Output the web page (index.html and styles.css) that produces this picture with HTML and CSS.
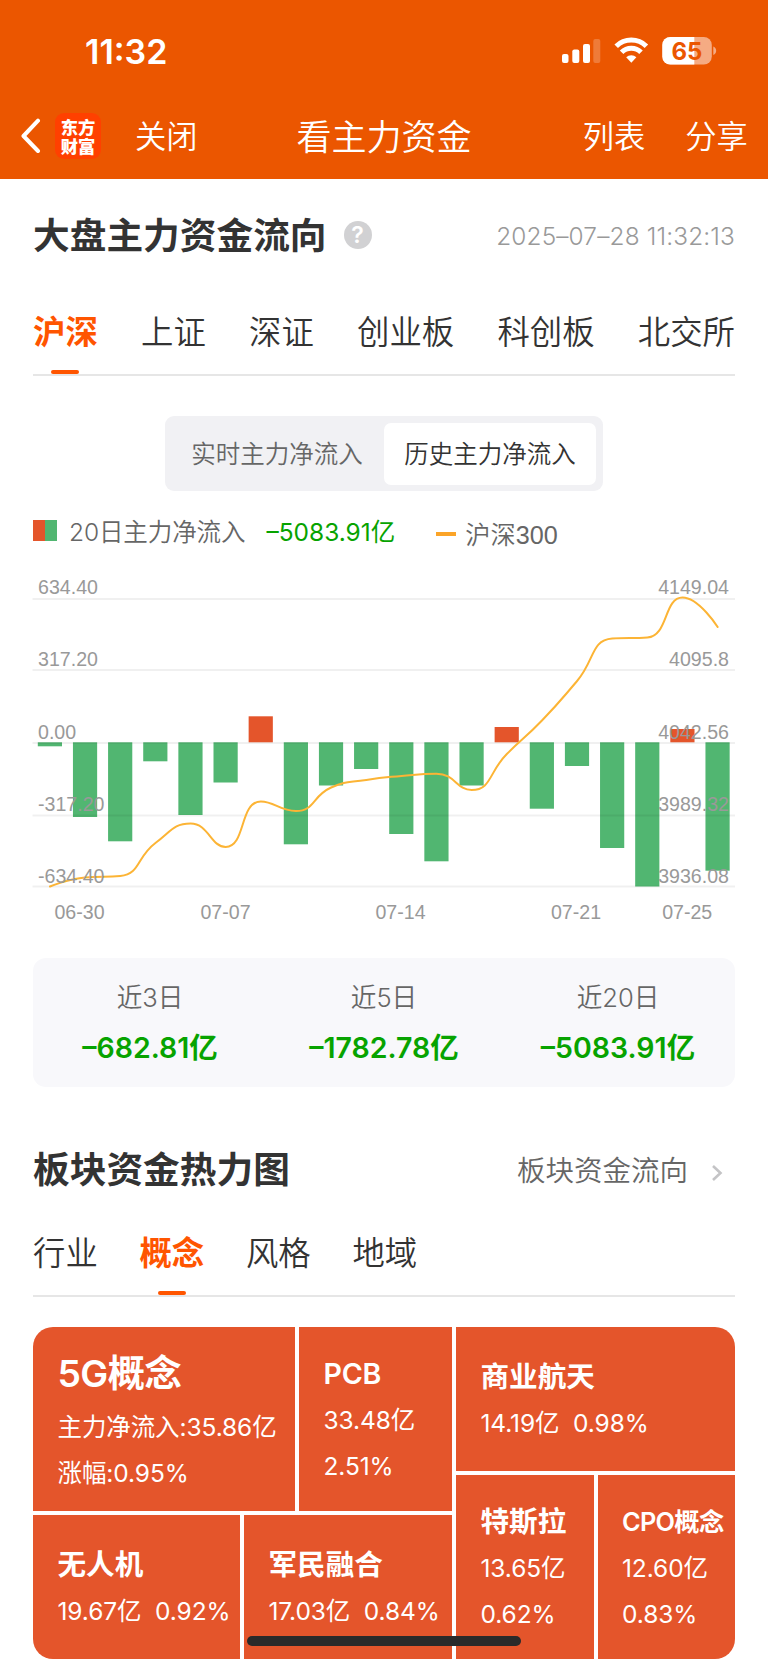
FILE: index.html
```html
<!DOCTYPE html>
<html lang="zh-CN">
<head>
<meta charset="utf-8">
<title>看主力资金</title>
<link rel="stylesheet" href="styles.css">
</head>
<body>
<header class="header">
  <div class="status">
    <span class="clock">11:32</span>
    <svg class="status-icons" width="160" height="34" viewBox="0 0 160 34">
      <g fill="#fff">
        <rect x="2" y="18" width="6.5" height="9" rx="2"/>
        <rect x="12.3" y="13.5" width="7" height="13.5" rx="2"/>
        <rect x="23" y="8" width="7" height="19" rx="2"/>
        <rect x="33.3" y="3" width="7" height="24" rx="2" opacity=".22"/>
      </g>
      <g fill="none" stroke="#fff" stroke-width="5">
        <path d="M56.2 10.2A21.5 21.5 0 0 1 86.4 10.2"/>
        <path d="M61.6 16.2A13.7 13.7 0 0 1 81 16.2"/>
      </g>
      <path d="M66.2 21.3A7.2 7.2 0 0 1 76.4 21.3L71.3 26.8Z" fill="#fff"/>
      <clipPath id="shell"><rect x="102.3" y="1" width="49.5" height="27.5" rx="8"/></clipPath>
      <g clip-path="url(#shell)">
        <rect x="102" y="1" width="50" height="28" fill="#f5ab83"/>
        <rect x="102" y="1" width="32.3" height="28" fill="#fff"/>
      </g>
      <path d="M153.3 10.5a4.6 4.6 0 0 1 0 8.5z" fill="#f5ab83"/>
      <text x="127" y="24" class="battery">65</text>
    </svg>
  </div>
  <nav class="nav">
    <svg class="back" width="20" height="36" viewBox="0 0 20 36"><path d="M17 2.7L2.5 18L17 33" fill="none" stroke="#fff" stroke-width="4" stroke-linecap="round" stroke-linejoin="round"/></svg>
    <span class="logo">东方<br>财富</span>
    <span class="close">关闭</span>
    <h1 class="title">看主力资金</h1>
    <span class="list">列表</span>
    <span class="share">分享</span>
  </nav>
</header>

<main class="main">
  <section>
    <div class="head head-flow">
      <h2>大盘主力资金流向</h2>
      <span class="help">?</span>
      <time class="date">2025–07–28 11:32:13</time>
    </div>
    <div class="tabs tabs-market">
      <span class="tab active">沪深</span><span class="tab">上证</span><span class="tab">深证</span><span class="tab">创业板</span><span class="tab">科创板</span><span class="tab">北交所</span>
    </div>
    <div class="segment">
      <span class="seg">实时主力净流入</span><span class="seg seg-on">历史主力净流入</span>
    </div>
    <div class="legend">
      <i class="swatch"></i>
      <span class="legend-name">20日主力净流入</span>
      <span class="legend-value">–5083.91亿</span>
      <i class="dash"></i>
      <span class="legend-index">沪深300</span>
    </div>
    <svg class="chart" id="chart" width="768" height="365" viewBox="0 570 768 365">
      <g id="bars"></g>
      <g class="grid">
        <path d="M32.5 599H735M32.5 670H735M32.5 743H735M32.5 815.5H735M32.5 886.5H735"/>
      </g>
      <path id="line" class="line"/>
      <g class="axis">
        <text x="38" y="593.6">634.40</text><text x="38" y="666">317.20</text><text x="38" y="738.5">0.00</text><text x="38" y="810.5">-317.20</text><text x="38" y="882.6">-634.40</text>
      </g>
      <g class="axis end">
        <text x="729" y="593.6">4149.04</text><text x="729" y="666">4095.8</text><text x="729" y="738.5">4042.56</text><text x="729" y="810.5">3989.32</text><text x="729" y="882.6">3936.08</text>
      </g>
      <g class="axis mid">
        <text x="79.5" y="918.5">06-30</text><text x="225.5" y="918.5">07-07</text><text x="400.5" y="918.5">07-14</text><text x="576" y="918.5">07-21</text><text x="687.2" y="918.5">07-25</text>
      </g>
    </svg>
    <div class="stats">
      <div><span>近3日</span><b>–682.81亿</b></div>
      <div><span>近5日</span><b>–1782.78亿</b></div>
      <div><span>近20日</span><b>–5083.91亿</b></div>
    </div>
  </section>

  <section>
    <div class="head head-heat">
      <h2>板块资金热力图</h2>
      <span class="more">板块资金流向</span>
      <svg class="chev" width="12" height="18" viewBox="0 0 12 18"><path d="M2 2L9.5 9L2 16" fill="none" stroke="#c4c4c6" stroke-width="2.6"/></svg>
    </div>
    <div class="tabs tabs-kind">
      <span class="tab">行业</span><span class="tab active">概念</span><span class="tab">风格</span><span class="tab">地域</span>
    </div>
    <div class="map">
      <div class="map-left">
        <div class="row row-a">
          <div class="tile"><b class="t-xl">5G概念</b><span>主力净流入:35.86亿</span><span>涨幅:0.95%</span></div>
          <div class="tile"><b class="t-lg">PCB</b><span>33.48亿</span><span>2.51%</span></div>
        </div>
        <div class="row row-b">
          <div class="tile"><b>无人机</b><span>19.67亿&nbsp; 0.92%</span></div>
          <div class="tile"><b>军民融合</b><span>17.03亿&nbsp; 0.84%</span></div>
        </div>
      </div>
      <div class="map-right">
        <div class="tile tile-wide"><b>商业航天</b><span>14.19亿&nbsp; 0.98%</span></div>
        <div class="row row-c">
          <div class="tile"><b>特斯拉</b><span>13.65亿</span><span>0.62%</span></div>
          <div class="tile"><b class="t-sm">CPO概念</b><span>12.60亿</span><span>0.83%</span></div>
        </div>
      </div>
    </div>
  </section>
</main>
<div class="home"></div>
<script src="chart.js"></script>
</body>
</html>
```
FILE: styles.css
```css
* { box-sizing: border-box; }
body {
  margin: 0;
  width: 768px;
  height: 1663px;
  overflow: hidden;
  position: relative;
  background: #fff;
  color: #333;
  font-family: Inter, "Noto Sans CJK SC", sans-serif;
  white-space: nowrap;
}
h1, h2 { margin: 0; }
i { display: block; }

.header { height: 179px; background: #eb5600; color: #fff; }
.status { height: 102px; display: flex; justify-content: space-between; padding: 36px 48px 0 85px; }
.clock { font-size: 34px; line-height: 31px; font-weight: 600; }
.status-icons { flex: none; }
.battery { font: 700 24px Inter, sans-serif; fill: #eb5600; text-anchor: middle; }
.nav { height: 68px; display: flex; align-items: center; font-weight: 350; font-size: 31.3px; line-height: 40px; }
.nav > span:not(.logo), .title { margin-top: 1px; }
.back { margin-left: 21px; }
.logo {
  width: 46px; height: 46px; margin-left: 14px; padding-top: 4px; border-radius: 9px; background: #ff4000;
  font: 900 17.3px/19px "Noto Sans CJK SC", sans-serif; text-align: center;
}
.close { margin-left: 34px; }
.title { margin-left: 99px; font-size: 35px; font-weight: 350; }
.list { margin-left: 111px; }
.share { margin-left: 40px; }

.main { padding: 0 33px; }
.head { display: flex; align-items: center; }
.head h2 { font-size: 36.7px; line-height: 50px; font-weight: 600; }
.head-flow { height: 112px; padding-top: 2px; }
.help {
  width: 28px; height: 28px; margin: -2px 0 0 17px; border-radius: 50%;
  background: #d1d1d3; color: #fff; font-size: 23px; line-height: 28px; font-weight: 600; text-align: center;
}
.date { margin-left: auto; font-size: 24.4px; font-weight: 350; color: #999; letter-spacing: 0.15px; }

.tabs { display: flex; border-bottom: 2px solid #e6e6e6; }
.tab { position: relative; font-size: 32.4px; line-height: 48px; font-weight: 350; }
.tab.active { color: #ff5500; font-weight: 600; }
.tab.active::after {
  content: ""; position: absolute; left: 50%; bottom: 0; width: 28px; height: 4px;
  margin-left: -14px; border-radius: 2px; background: #ff5500;
}
.tabs-market { height: 85px; padding-top: 18px; justify-content: space-between; }

.segment {
  width: 438px; height: 75px; margin: 40px auto 0 132px; padding: 7px; border-radius: 9px;
  display: flex; background: #f1f1f4; font-size: 24.5px; line-height: 62px; font-weight: 350; color: #666;
}
.seg { width: 212px; text-align: center; padding-right: 2px; }
.seg-on { height: 62px; border-radius: 7px; background: #fff; color: #333; padding-right: 0; }

.legend { height: 79px; display: flex; align-items: center; font-size: 24.5px; font-weight: 350; color: #666; }
.swatch { width: 24px; height: 21px; margin-top: -1px; background: linear-gradient(90deg, #e4552b 50%, #51b671 50%); }
.legend-name { margin-left: 12px; letter-spacing: -0.1px; }
.legend-value { margin-left: 21px; color: #07a300; font-weight: 400; }
.dash { width: 20px; height: 4px; margin: 7px 0 0 41px; background: #fba428; }
.legend-index { margin: 4px 0 0 9px; font-family: "Liberation Sans", "Noto Sans CJK SC", sans-serif; font-size: 25.2px; }

.chart { display: block; margin-left: -33px; }
.grid { fill: none; stroke: rgba(0, 0, 0, .06); stroke-width: 2; }
.line { fill: none; stroke: #fcb435; stroke-width: 2; stroke-linecap: round; }
.axis { font: 19.6px "Liberation Sans", sans-serif; fill: #999; }
.end { text-anchor: end; }
.mid { text-anchor: middle; }
.bar-up { fill: #e4552b; }
.bar-down { fill: #51b671; }

.stats { height: 129px; margin-top: 23px; border-radius: 13px; background: #f8f8fb; display: grid; grid-template-columns: repeat(3, 1fr); }
.stats div { display: flex; flex-direction: column; align-items: center; padding-top: 15px; }
.stats span { font-size: 25.6px; line-height: 50px; font-weight: 350; color: #666; }
.stats b { font-size: 28.5px; line-height: 50px; font-weight: 600; color: #07a300; }

.head-heat { height: 100px; margin-top: 32px; padding-top: 2px; }
.more { margin-left: auto; margin-top: -3px; font-size: 28.5px; font-weight: 350; color: #666; }
.chev { margin: 5px 12px 0 23px; }
.tabs-kind { height: 78px; padding-top: 11px; gap: 41.7px; }

.map { margin-top: 30px; height: 332px; border-radius: 20px; overflow: hidden; display: flex; gap: 4px; }
.map-left { width: 419px; display: flex; flex-direction: column; gap: 4px; }
.map-right { width: 279px; display: flex; flex-direction: column; gap: 4px; }
.row { display: grid; gap: 4px; }
.row-a { height: 184px; grid-template-columns: 262px 153px; }
.row-b { height: 144px; grid-template-columns: 207px 208px; }
.row-c { height: 184px; grid-template-columns: 1fr 1fr; }
.tile-wide { height: 144px; }
.tile { padding: 1px 0 0 24.5px; background: #e4552b; color: #fff; display: flex; flex-direction: column; justify-content: center; }
.tile b { font-size: 28.6px; line-height: 47px; font-weight: 600; }
.tile span { font-size: 24.5px; line-height: 46px; font-weight: 400; letter-spacing: -0.1px; }
.tile .t-xl { font-size: 37.3px; line-height: 60px; letter-spacing: -0.6px; }
.tile .t-sm { font-size: 25.3px; font-weight: 600; letter-spacing: -0.7px; }
.tile .t-lg { font-weight: 600; letter-spacing: -0.3px; }

.home { position: absolute; left: 247px; top: 1636px; width: 274px; height: 10px; border-radius: 5px; background: #2a2a2a; }
```
FILE: chart.js
```js
const NS = "http://www.w3.org/2000/svg";
const base = 742.3;
const ends = [746.3, 817, 841.3, 761.3, 815, 782.5, 716.3, 844.3, 785.5, 769, 834, 861.3, 785.5, 727, 808.7, 766, 848, 886.5, 729, 870.7];
const index = [886.5, 877.5, 876, 843, 823.5, 847, 801.5, 811, 787.5, 780, 776, 773.7, 790, 754, 720.5, 681, 638.5, 637.5, 597.5, 627];
const step = 35.14;

const bars = document.getElementById("bars");
ends.forEach((y, i) => {
  const r = document.createElementNS(NS, "rect");
  r.setAttribute("x", 37.8 + step * i);
  r.setAttribute("width", 24.2);
  r.setAttribute("y", Math.min(y, base));
  r.setAttribute("height", Math.abs(y - base));
  r.setAttribute("class", y < base ? "bar-up" : "bar-down");
  bars.appendChild(r);
});

// Smoothed curve whose control points never leave their segment.
const pts = index.map((y, i) => [50 + step * i, y]);
const clamp = (v, a, b) => Math.max(Math.min(a, b), Math.min(Math.max(a, b), v));
let d = `M${pts[0]}`;
let out = pts[0];
for (let i = 1; i < pts.length; i++) {
  const p = pts[i], prev = pts[i - 1], next = pts[i + 1];
  let cin = p, cout = p;
  if (next) {
    const a = Math.hypot(p[0] - prev[0], p[1] - prev[1]);
    const b = Math.hypot(next[0] - p[0], next[1] - p[1]);
    cout = p.map((v, k) => clamp(v + (next[k] - prev[k]) * 0.5 * b / (a + b), v, next[k]));
    cin = p.map((v, k) => clamp(v - (cout[k] - v) * a / b, v, prev[k]));
    cout = p.map((v, k) => v + (v - cin[k]) * b / a);
  }
  d += `C${out} ${cin} ${p}`;
  out = cout;
}
document.getElementById("line").setAttribute("d", d);
```
